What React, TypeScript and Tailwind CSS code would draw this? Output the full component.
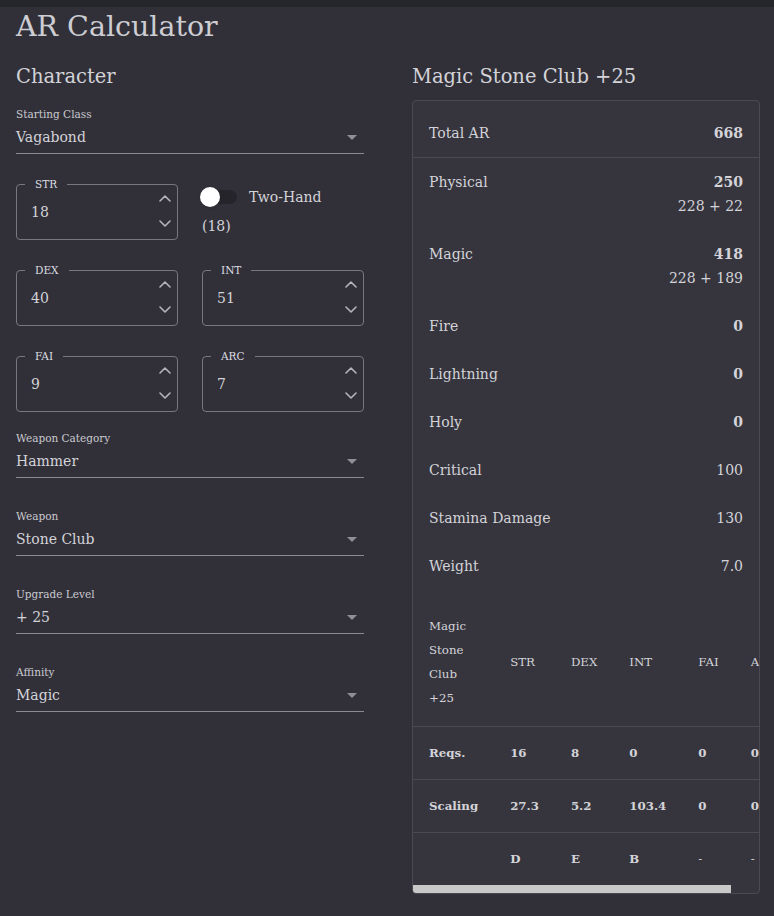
import React from 'react'

const font = { fontFamily: '"DejaVu Serif", "Liberation Serif", serif' }

function Caret() {
  return (
    <svg width="10" height="5" viewBox="0 0 10 5" className="mr-[7px] shrink-0">
      <path d="M0 0 L5 5 L10 0 Z" fill="#8f8f94" />
    </svg>
  )
}

function Chevron({ up }: { up?: boolean }) {
  return (
    <svg width="12" height="8" viewBox="0 0 12 8">
      <polyline
        points={up ? '1,7 6,2 11,7' : '1,1 6,6 11,1'}
        fill="none"
        stroke="#b4b4b9"
        strokeWidth="1.6"
        strokeLinecap="round"
        strokeLinejoin="round"
      />
    </svg>
  )
}

function SelectField({ label, value }: { label: string; value: string }) {
  return (
    <div className="flex flex-col h-[48px]">
      <div className="text-[10.5px] leading-4 h-4 text-[#cacacf]">{label}</div>
      <div className="flex items-center justify-between h-[32px] pt-1 pb-[5px] border-b border-[#8a8a90]">
        <span className="text-[14px] leading-[23px]">{value}</span>
        <Caret />
      </div>
    </div>
  )
}

function StatField({ label, value }: { label: string; value: number }) {
  return (
    <div className="relative flex h-[56px] rounded border border-[#77777d]">
      <span className="absolute -top-[9px] left-2 px-[10px] bg-[#313039] text-[10.5px] leading-4 text-[#dcdce0]">
        {label}
      </span>
      <div className="flex-1 flex items-center pl-[14px] text-[14px]">{value}</div>
      <div className="flex flex-col justify-between pt-[9px] pb-[11px] pr-[6px]">
        <Chevron up />
        <Chevron />
      </div>
    </div>
  )
}

const stats = [
  { label: 'Physical', value: '250', sub: '228 + 22', bold: true },
  { label: 'Magic', value: '418', sub: '228 + 189', bold: true },
  { label: 'Fire', value: '0', bold: true },
  { label: 'Lightning', value: '0', bold: true },
  { label: 'Holy', value: '0', bold: true },
  { label: 'Critical', value: '100' },
  { label: 'Stamina Damage', value: '130' },
  { label: 'Weight', value: '7.0' },
]

const attrs = ['STR', 'DEX', 'INT', 'FAI', 'ARC']
const reqs = ['16', '8', '0', '0', '0']
const scaling = ['27.3', '5.2', '103.4', '0', '0']
const grades = ['D', 'E', 'B', '-', '-']

export default function App() {
  return (
    <div style={font} className="min-h-[916px] bg-[#313039] text-[#d3d3d8]">
      <div className="h-[7px] bg-[#25252c]" />
      <div className="px-4">
        <h1 className="text-[28.5px] leading-[40px] mb-[14px] text-[#cdcdd2]">AR Calculator</h1>

        <div className="grid grid-cols-[348px_348px] gap-12">
          <div className="flex flex-col">
            <h2 className="text-[19.5px] leading-8">Character</h2>
            <div className="mt-[13px]">
              <SelectField label="Starting Class" value="Vagabond" />
            </div>

            <div className="grid grid-cols-2 gap-x-6 gap-y-[30px] mt-[30px]">
              <StatField label="STR" value={18} />
              <div className="flex flex-col">
                <label className="flex items-center h-[38px] -mt-[6px] -ml-[11px]">
                  <span className="relative w-[58px] h-[38px] p-3">
                    <span className="block h-[14px] w-[34px] rounded-full bg-[#25242a]" />
                    <span className="absolute left-[9px] top-[9px] h-5 w-5 rounded-full bg-white shadow" />
                  </span>
                  <span className="text-[14px]">Two-Hand</span>
                </label>
                <span className="text-[14px] leading-6 -mt-[2px]">(18)</span>
              </div>
              <StatField label="DEX" value={40} />
              <StatField label="INT" value={51} />
              <StatField label="FAI" value={9} />
              <StatField label="ARC" value={7} />
            </div>

            <div className="flex flex-col gap-[30px] mt-[18px]">
              <SelectField label="Weapon Category" value="Hammer" />
              <SelectField label="Weapon" value="Stone Club" />
              <SelectField label="Upgrade Level" value="+ 25" />
              <SelectField label="Affinity" value="Magic" />
            </div>
          </div>

          <div className="flex flex-col min-w-0">
            <h2 className="text-[19.5px] leading-8">Magic Stone Club +25</h2>
            <div className="mt-[7px] rounded border border-[#4b4a53] bg-[#36353e] overflow-hidden">
              <div className="py-2 text-[14px]">
                <div className="flex justify-between px-4 py-3 leading-6 border-b border-[#4b4a53]">
                  <span>Total AR</span>
                  <span className="font-bold">668</span>
                </div>
                {stats.map((s) => (
                  <div key={s.label} className="flex justify-between px-4 py-3 leading-6">
                    <span>{s.label}</span>
                    <div className="flex flex-col items-end">
                      <span className={s.bold ? 'font-bold' : ''}>{s.value}</span>
                      {s.sub && <span>{s.sub}</span>}
                    </div>
                  </div>
                ))}
              </div>

              <div className="overflow-x-auto">
                <table className="w-full border-collapse text-[11.8px] text-left">
                  <thead>
                    <tr className="border-b border-[#4b4a53]">
                      <th className="p-4 leading-6 font-normal">Magic Stone Club +25</th>
                      {attrs.map((a) => (
                        <th key={a} className="p-4 leading-6 font-normal">{a}</th>
                      ))}
                    </tr>
                  </thead>
                  <tbody>
                    <tr className="border-b border-[#4b4a53]">
                      <td className="p-4 leading-5 font-bold">Reqs.</td>
                      {reqs.map((r, i) => (
                        <td key={i} className="p-4 leading-5 font-bold">{r}</td>
                      ))}
                    </tr>
                    <tr className="border-b border-[#4b4a53]">
                      <td className="p-4 leading-5 font-bold">Scaling</td>
                      {scaling.map((r, i) => (
                        <td key={i} className="p-4 leading-5 font-bold">{r}</td>
                      ))}
                    </tr>
                    <tr>
                      <td className="p-4 leading-5 font-bold"></td>
                      {grades.map((r, i) => (
                        <td key={i} className={'p-4 leading-5 ' + (r === '-' ? 'font-normal' : 'font-bold')}>{r}</td>
                      ))}
                    </tr>
                  </tbody>
                </table>
              </div>
              <div className="h-2">
                <div className="h-2 w-[92%] bg-[#c8c8c8]" />
              </div>
            </div>
          </div>
        </div>
      </div>
    </div>
  )
}
